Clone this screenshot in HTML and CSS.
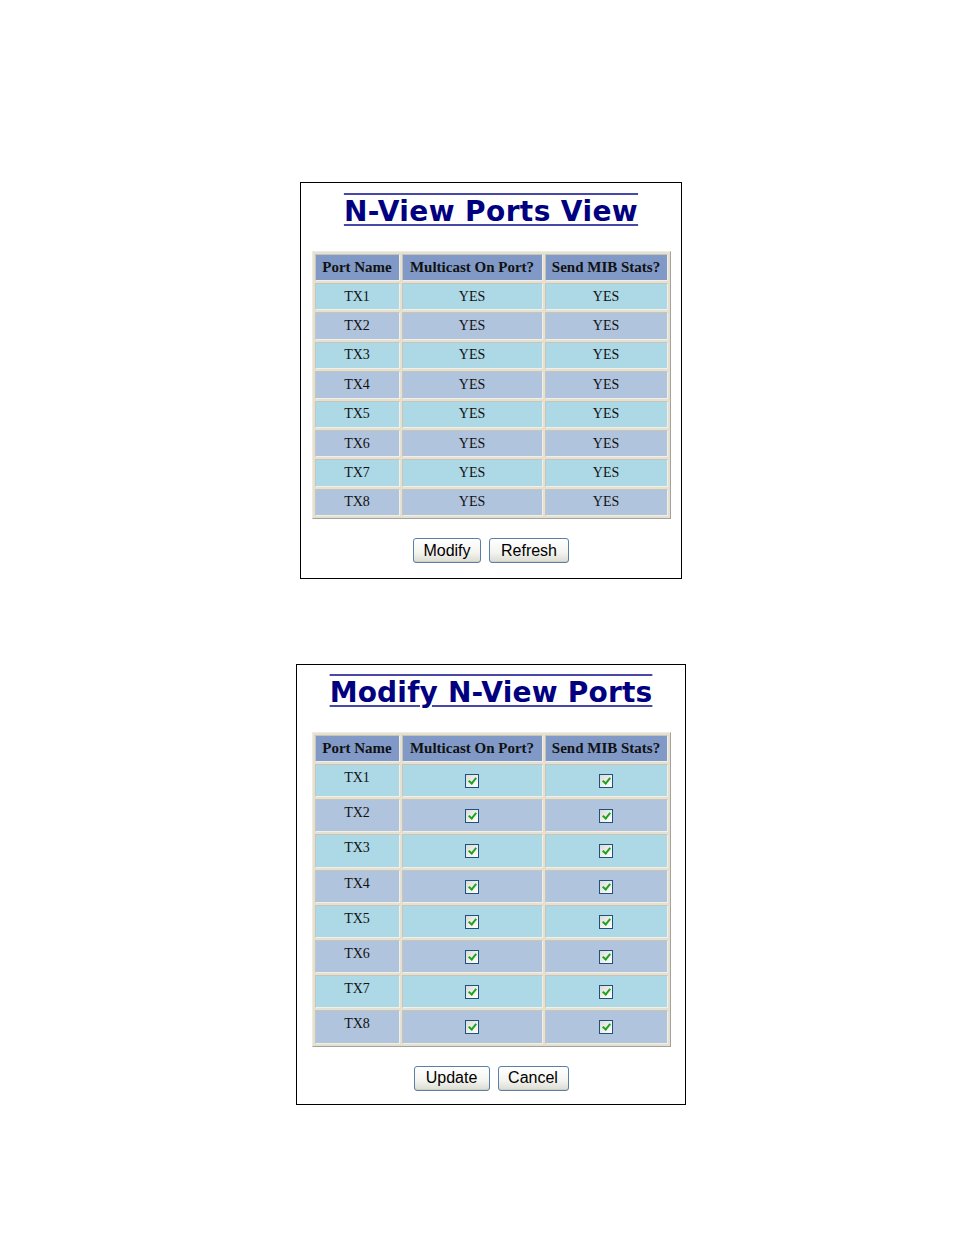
FILE: index.html
```html
<!DOCTYPE html>
<html>
<head>
<meta charset="utf-8">
<link rel="stylesheet" href="styles.css">
</head>
<body>
<div class="page">
  <div class="panel panel-view">
    <h1 class="title">N-View Ports View</h1>
    <table class="grid">
      <thead>
        <tr><th class="c1">Port Name</th><th class="c2">Multicast On Port?</th><th class="c3">Send MIB Stats?</th></tr>
      </thead>
      <tbody>
        <tr class="odd"><td>TX1</td><td>YES</td><td>YES</td></tr>
        <tr class="even"><td>TX2</td><td>YES</td><td>YES</td></tr>
        <tr class="odd"><td>TX3</td><td>YES</td><td>YES</td></tr>
        <tr class="even"><td>TX4</td><td>YES</td><td>YES</td></tr>
        <tr class="odd"><td>TX5</td><td>YES</td><td>YES</td></tr>
        <tr class="even"><td>TX6</td><td>YES</td><td>YES</td></tr>
        <tr class="odd"><td>TX7</td><td>YES</td><td>YES</td></tr>
        <tr class="even"><td>TX8</td><td>YES</td><td>YES</td></tr>
      </tbody>
    </table>
    <div class="buttons">
      <button class="btn btn-modify">Modify</button>
      <button class="btn btn-refresh">Refresh</button>
    </div>
  </div>

  <div class="panel panel-modify">
    <h1 class="title">Modify N-View Ports</h1>
    <table class="grid grid-edit">
      <thead>
        <tr><th class="c1">Port Name</th><th class="c2">Multicast On Port?</th><th class="c3">Send MIB Stats?</th></tr>
      </thead>
      <tbody>
        <tr class="odd"><td>TX1</td><td><span class="cb"></span></td><td><span class="cb"></span></td></tr>
        <tr class="even"><td>TX2</td><td><span class="cb"></span></td><td><span class="cb"></span></td></tr>
        <tr class="odd"><td>TX3</td><td><span class="cb"></span></td><td><span class="cb"></span></td></tr>
        <tr class="even"><td>TX4</td><td><span class="cb"></span></td><td><span class="cb"></span></td></tr>
        <tr class="odd"><td>TX5</td><td><span class="cb"></span></td><td><span class="cb"></span></td></tr>
        <tr class="even"><td>TX6</td><td><span class="cb"></span></td><td><span class="cb"></span></td></tr>
        <tr class="odd"><td>TX7</td><td><span class="cb"></span></td><td><span class="cb"></span></td></tr>
        <tr class="even"><td>TX8</td><td><span class="cb"></span></td><td><span class="cb"></span></td></tr>
      </tbody>
    </table>
    <div class="buttons">
      <button class="btn btn-update">Update</button>
      <button class="btn btn-cancel">Cancel</button>
    </div>
  </div>
</div>
</body>
</html>
```

FILE: styles.css
```css
html, body {
  margin: 0;
  padding: 0;
  background: #ffffff;
}
.page {
  display: flex;
  flex-direction: column;
  align-items: center;
  padding: 182px 0 0 28px;
  gap: 85px;
  font-family: "Liberation Serif", serif;
}
.panel {
  border: 1px solid #000;
  box-sizing: border-box;
  display: flex;
  flex-direction: column;
  align-items: center;
}
.panel-view {
  width: 382px;
  height: 397px;
  padding-top: 11px;
}
.panel-modify {
  width: 390px;
  height: 441px;
  padding-top: 10px;
}
.title {
  margin: 0;
  font-family: "DejaVu Sans", Verdana, sans-serif;
  font-weight: bold;
  font-size: 28px;
  line-height: 36px;
  color: #000080;
  text-decoration: underline overline;
  text-decoration-color: #4848a8;
  text-decoration-thickness: 2px;
  text-underline-offset: 3px;
  white-space: nowrap;
}
.panel-view .title { letter-spacing: 0.4px; }
.panel-modify .title { letter-spacing: 0.2px; }
.grid {
  margin-top: 21px;
  width: 359px;
  border-collapse: separate;
  border-spacing: 2px;
  background: #e4e0d2;
  border: 1px solid;
  border-color: #eeebe2 #a4a29a #a4a29a #eeebe2;
  font-size: 14px;
  color: #111;
}
.grid th, .grid td {
  text-align: center;
  padding: 0;
  border: 1px solid;
  border-color: #c8c4b8 #f2efe6 #f2efe6 #c8c4b8;
}
.grid th {
  background: #8099c7;
  font-weight: bold;
  font-size: 15px;
  height: 25px;
  white-space: nowrap;
}
.grid td {
  height: 25.4px;
}
.c1 { width: 83px; }
.c2 { width: 139px; }
.grid .odd td { background: #add8e6; }
.grid .even td { background: #b0c4de; }
.grid-edit td {
  height: 33.2px;
  vertical-align: top;
  line-height: 16px;
  padding-top: 5px;
  box-sizing: border-box;
}
.cb {
  display: inline-block;
  width: 14px;
  height: 14px;
  margin-top: 4px;
  box-sizing: border-box;
  border: 1px solid #1c5180;
  background: linear-gradient(135deg, #dcdcd6 0%, #ffffff 100%);
  position: relative;
  vertical-align: top;
}
.cb::after {
  content: "";
  position: absolute;
  left: 4px;
  top: 1px;
  width: 3px;
  height: 6px;
  border: solid #21a121;
  border-width: 0 2px 2px 0;
  transform: rotate(40deg);
}
.buttons {
  display: flex;
  gap: 8px;
  margin-top: 19px;
}
.btn {
  font-family: "Liberation Sans", Arial, sans-serif;
  font-size: 16px;
  color: #000;
  height: 25px;
  padding: 0;
  border: 1px solid #5b7fa8;
  border-radius: 3px;
  background: linear-gradient(#ffffff 0%, #f3f3ef 60%, #dcdcd4 100%);
  box-shadow: inset 0 -1px 0 #cfcfc6;
}
.btn-modify { width: 68px; }
.btn-refresh { width: 80px; }
.btn-update { width: 76px; }
.btn-cancel { width: 71px; }
```
